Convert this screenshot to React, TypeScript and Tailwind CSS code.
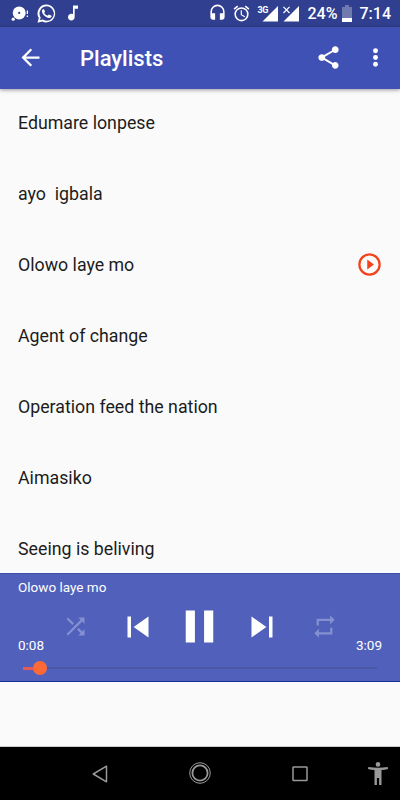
import { ReactNode } from 'react';

interface Song {
  title: string;
  playing?: boolean;
}

const songs: Song[] = [
  { title: 'Edumare lonpese' },
  { title: 'ayo  igbala' },
  { title: 'Olowo laye mo', playing: true },
  { title: 'Agent of change' },
  { title: 'Operation feed the nation' },
  { title: 'Aimasiko' },
  { title: 'Seeing is beliving' },
];

function Icon({ className, children }: { className: string; children: ReactNode }) {
  return (
    <svg viewBox="0 0 24 24" fill="currentColor" className={`shrink-0 ${className}`}>
      {children}
    </svg>
  );
}

function StatusBar() {
  return (
    <div className="flex h-[27px] shrink-0 items-center bg-[#303f8f] text-white">
      <svg viewBox="0 0 18 18" className="ml-[11px] h-[18px] w-[18px]" fill="currentColor">
        <circle cx="8.2" cy="7.9" r="6.5" />
        <circle cx="2.2" cy="14.2" r="1.6" />
        <circle cx="8.2" cy="7.9" r="1.1" fill="#303f8f" />
        <path d="M15.700 5.500h1.300v3.500h-1.300zM15.700 10.500h1.300v1.500h-1.300z" />
      </svg>
      <Icon className="mb-[1px] ml-[7px] h-[21px] w-[21px]">
        <path d="M12 1.800A10.200 10.200 0 0 0 3.200 17.200L1.700 22.500l5.400-1.400A10.200 10.200 0 1 0 12 1.800zm0 18.400a8.200 8.200 0 0 1-4.200-1.200l-3.300.8.9-3.200A8.200 8.200 0 1 1 12 20.200z" />
        <path d="M16.800 14.100c-.3-.1-1.600-.8-1.800-.9s-.4-.1-.6.1-.7.9-.8 1-.3.2-.6.1a7 7 0 0 1-3.500-3.100c-.3-.4.2-.4.7-1.300.1-.2 0-.3 0-.5L9.400 7.600c-.2-.6-.4-.5-.6-.5-.6 0-.9 0-1.200.4-.8.8-1.100 1.700-.8 2.700.6 2.300 3.300 5.300 5.900 6.300 1.800.7 2.500.7 3.400.4.7-.2 1.400-.7 1.600-1.300.3-.8.3-1.200-.9-1.500z" />
      </Icon>
      <Icon className="mb-[1px] ml-[6px] h-[20px] w-[20px]">
        <path d="M12 3v10.550c-.59-.34-1.270-.55-2-.55-2.210 0-4 1.790-4 4s1.790 4 4 4 4-1.790 4-4V7h4V3h-6z" />
      </Icon>
      <div className="ml-auto flex items-center">
        <Icon className="mb-[2px] h-[19px] w-[19px]">
          <path d="M12 2a9 9 0 0 0-9 9v7a3 3 0 0 0 3 3h3v-8H5v-2a7 7 0 0 1 14 0v2h-4v8h3a3 3 0 0 0 3-3v-7a9 9 0 0 0-9-9z" />
        </Icon>
        <Icon className="ml-[5px] h-[19px] w-[19px]">
          <path d="M22 5.720l-4.600-3.860-1.290 1.530 4.600 3.860L22 5.720zM7.880 3.390L6.600 1.860 2 5.710l1.290 1.530 4.590-3.850zM12.500 8H11v6l4.750 2.850.75-1.230-4-2.370V8zM12 4a9 9 0 1 0 0 18 9 9 0 0 0 0-18zm0 16a7 7 0 1 1 0-14 7 7 0 0 1 0 14z" />
        </Icon>
        <div className="relative ml-[10px] h-[16px] w-[18px]">
          <svg viewBox="0 0 18 16" className="h-full w-full" fill="currentColor">
            <path d="M17 0v15.500H1.500z" />
          </svg>
          <span className="absolute top-0 -left-[3px] bg-[#303f8f] text-[9px] leading-[8px] font-bold tracking-[-0.5px]">3G</span>
        </div>
        <svg viewBox="0 0 18 16" className="ml-[3px] h-[16px] w-[18px]" fill="currentColor">
          <path d="M17 0v15.500H1.500z" />
          <path d="M0 0h9v7.500H0z" fill="#303f8f" />
          <path d="M1.500.800l6 6.200M7.500.800l-6 6.200" stroke="currentColor" strokeWidth="1.200" />
        </svg>
        <span className="mt-px ml-[8px] w-[29px] text-[16px] leading-none font-medium whitespace-nowrap">24%</span>
        <svg viewBox="0 0 10 17" className="ml-[5px] h-[17px] w-[10px]">
          <path d="M3 0h4v2h3v11H0V2h3z" fill="#707aae" />
          <path d="M0 13h10v4H0z" fill="white" />
        </svg>
        <span className="mt-px mr-[9px] ml-[8px] text-[16px] leading-none font-medium">7:14</span>
      </div>
    </div>
  );
}

function AppBar() {
  return (
    <div className="z-10 flex h-[62px] shrink-0 items-center bg-[#3f51b5] pr-[11px] pb-px pl-[17px] text-white shadow-[0_1px_4px_rgba(0,0,0,0.4)]">
      <Icon className="h-[27px] w-[27px]">
        <path d="M20 11H7.830l5.590-5.590L12 4l-8 8 8 8 1.410-1.410L7.830 13H20v-2z" />
      </Icon>
      <h1 className="mt-[2px] ml-[36px] text-[22px] leading-none font-medium">Playlists</h1>
      <Icon className="ml-auto h-[27px] w-[27px]">
        <path d="M18 16.080c-.76 0-1.440.3-1.960.77L8.910 12.700c.05-.23.09-.46.09-.7s-.04-.47-.09-.7l7.050-4.110c.54.5 1.250.81 2.040.81 1.660 0 3-1.340 3-3s-1.340-3-3-3-3 1.340-3 3c0 .24.04.47.09.7L8.040 9.810C7.500 9.310 6.790 9 6 9c-1.660 0-3 1.340-3 3s1.340 3 3 3c.79 0 1.500-.31 2.040-.81l7.120 4.160c-.05.21-.08.43-.08.650 0 1.610 1.310 2.920 2.920 2.920s2.920-1.310 2.920-2.920-1.310-2.920-2.920-2.920z" />
      </Icon>
      <Icon className="ml-[20px] h-[27px] w-[27px]">
        <circle cx="12" cy="6" r="2.200" />
        <circle cx="12" cy="12" r="2.200" />
        <circle cx="12" cy="18" r="2.200" />
      </Icon>
    </div>
  );
}

function SongRow({ song }: { song: Song }) {
  return (
    <li className="flex h-[71.100px] shrink-0 items-center justify-between pr-[17.500px] pl-[18px] text-[17.780px] text-[#1c1c1c]">
      <span className="pt-[1.200px] whitespace-pre">{song.title}</span>
      {song.playing && (
        <Icon className="h-[27px] w-[27px] text-[#f4431c]">
          <path d="M10 16.500l6-4.500-6-4.500v9zM12 2a10 10 0 1 0 0 20 10 10 0 0 0 0-20zm0 18a8 8 0 1 1 0-16 8 8 0 0 1 0 16z" />
        </Icon>
      )}
    </li>
  );
}

function Player() {
  return (
    <div className="h-[109px] shrink-0 border-t border-b border-t-[#3e4fb0] border-b-[#122f93] bg-[#5161bb] text-[13.500px] text-white">
      <div className="flex h-[27px] items-center pl-[18px]">Olowo laye mo</div>
      <div className="flex h-[52px] items-center pl-[62px]">
        <Icon className="mb-px h-[27px] w-[27px] text-[#8490cf]">
          <path d="M10.590 9.170L5.410 4 4 5.410l5.170 5.170 1.420-1.410zM14.500 4l2.040 2.040L4 18.590 5.410 20 17.960 7.460 20 9.500V4h-5.500zm.33 9.410l-1.410 1.410 3.130 3.130L14.500 20H20v-5.500l-2.040 2.040-3.130-3.130z" />
        </Icon>
        <Icon className="ml-[28px] h-[42px] w-[42px]">
          <path d="M6 6h2v12H6zm3.500 6l8.500 6V6z" />
        </Icon>
        <Icon className="mb-px ml-[13px] h-[55px] w-[55px]">
          <path d="M6 19h4V5H6v14zm8-14v14h4V5h-4z" />
        </Icon>
        <Icon className="ml-[14px] h-[42px] w-[42px]">
          <path d="M6 18l8.500-6L6 6v12zM16 6v12h2V6h-2z" />
        </Icon>
        <Icon className="mb-px ml-[28px] h-[27px] w-[27px] text-[#8490cf]">
          <path d="M7 7h10v3l4-4-4-4v3H5v6h2V7zm10 10H7v-3l-4 4 4 4v-3h12v-6h-2v4z" />
        </Icon>
      </div>
      <div className="-mt-[17px] flex justify-between px-[18px] leading-[19px]">
        <span>0:08</span>
        <span>3:09</span>
      </div>
      <div className="mx-[23px] mt-[6px] flex h-[14px] items-center">
        <div className="h-[3px] w-[10px] bg-[#e65a55]" />
        <div className="h-[14px] w-[14px] rounded-full bg-[#ff6936]" />
        <div className="h-[2px] flex-1 bg-[#4a57a7]" />
      </div>
    </div>
  );
}

function NavBar() {
  return (
    <div className="flex h-[54px] shrink-0 items-center border-t border-[#c8c8c8] bg-black text-[#999]">
      <svg viewBox="0 0 16 18" className="ml-[92px] h-[18px] w-[16px]" fill="none" stroke="currentColor" strokeWidth="1.500" strokeLinejoin="round">
        <path d="M14.500 1.200v15.600L1.300 9z" />
      </svg>
      <svg viewBox="0 0 22 22" className="mb-px ml-[81px] h-[22px] w-[22px]" fill="none" stroke="currentColor">
        <circle cx="11" cy="11" r="10.300" strokeWidth="1" />
        <circle cx="11" cy="11" r="7.600" strokeWidth="1.800" />
      </svg>
      <svg viewBox="0 0 16 16" className="ml-[81px] h-[16px] w-[16px]" fill="none" stroke="currentColor" strokeWidth="1.500">
        <rect x="1" y="1" width="14" height="13.500" rx="0.500" />
      </svg>
      <svg viewBox="0 0 20 23" className="ml-[60px] h-[23px] w-[20px]" fill="currentColor">
        <circle cx="10" cy="2.400" r="2.300" />
        <path d="M.3 5q9.700 1.600 19.400 0l.3 2q-3 .8-6.500 1v15h-2.400v-7H8.900v7H6.500V8Q3 7.800 0 7z" />
      </svg>
    </div>
  );
}

export default function App() {
  return (
    <div className="flex h-[800px] w-[400px] flex-col overflow-hidden bg-[#fafafa] font-[Roboto,sans-serif]">
      <StatusBar />
      <AppBar />
      <ul className="-mt-[2px] flex h-[486px] shrink-0 flex-col overflow-hidden">
        {songs.map((song) => (
          <SongRow key={song.title} song={song} />
        ))}
      </ul>
      <Player />
      <div className="flex-1" />
      <NavBar />
    </div>
  );
}
